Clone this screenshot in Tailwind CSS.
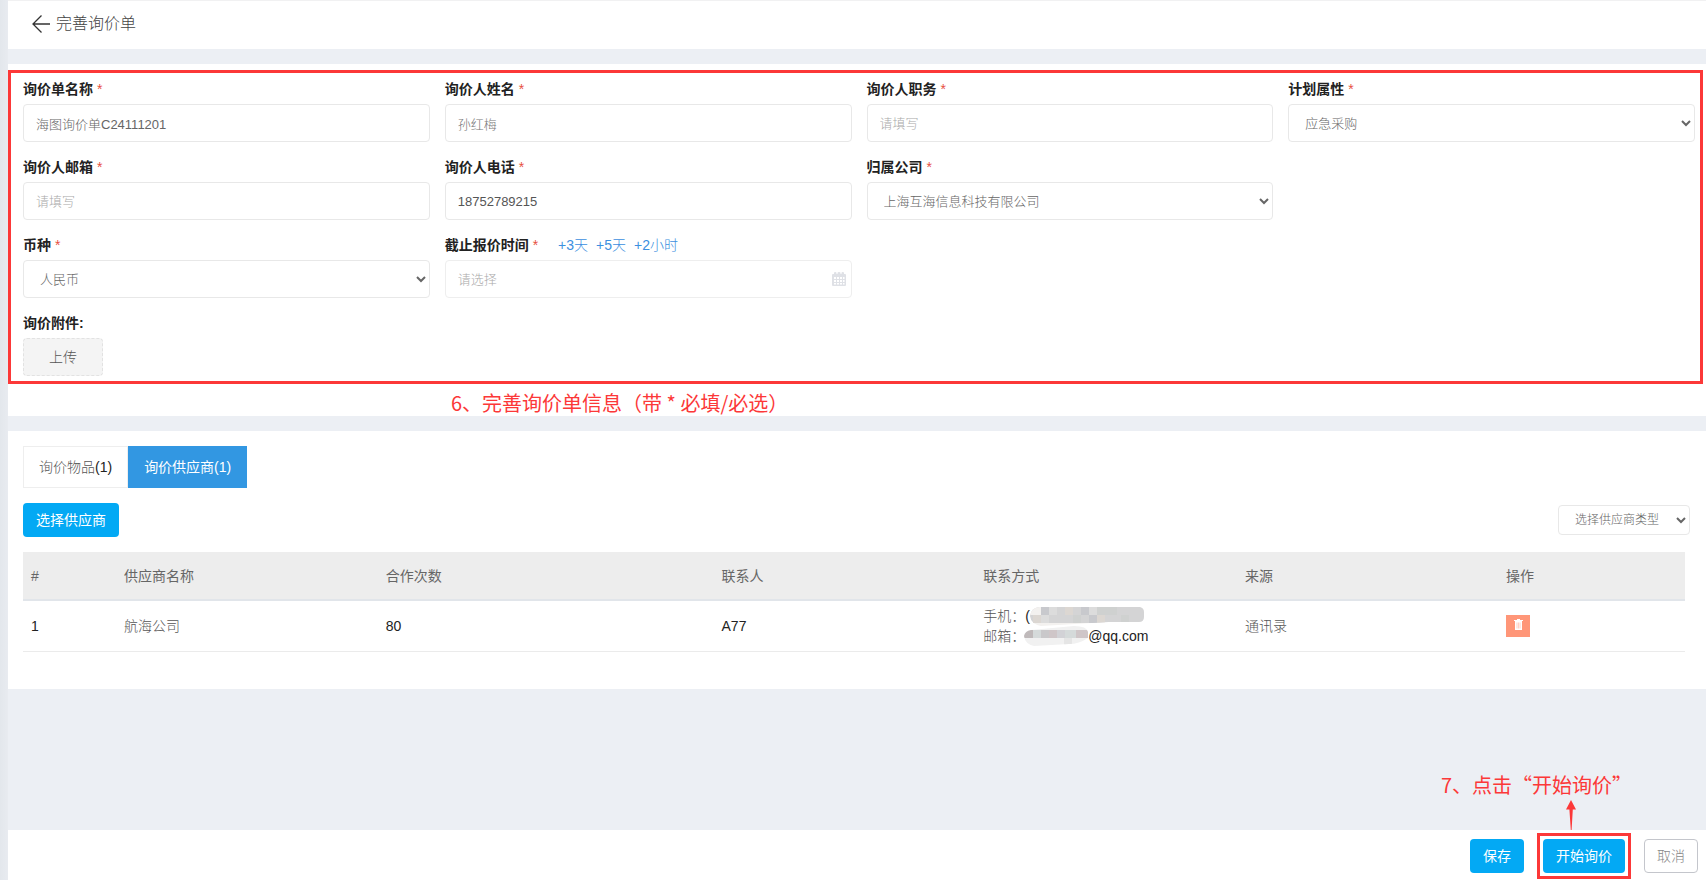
<!DOCTYPE html>
<html lang="zh-CN">
<head>
<meta charset="utf-8">
<title>完善询价单</title>
<script src="https://cdn.jsdelivr.net/npm/@tailwindcss/browser@4"></script>
</head>
<body class="flex min-h-screen bg-[#eceff4] font-['Liberation_Sans','Noto_Sans_CJK_SC',sans-serif] text-sm leading-5 text-[#222]">
<div class="w-2 shrink-0 bg-linear-to-r from-[#e3e7ec] to-[#e8ebf0]"></div>
<div class="flex min-w-0 flex-1 flex-col">

  <header class="flex h-[49px] items-center border-t border-[#f1f1f2] bg-white pb-0.5 pl-6">
    <a href="#" aria-label="返回" class="mr-1">
      <svg class="h-5 w-5" viewBox="0 0 20 20" fill="none" stroke="#333" stroke-width="1.3"><path d="M18 10H1M9.500 1.500L1 10l8.500 8.500"/></svg>
    </a>
    <h1 class="text-base leading-5 font-light text-[#444]">完善询价单</h1>
  </header>

  <section class="mt-[15px] bg-white pt-1.5">
    <form class="mr-[3px] grid grid-cols-4 gap-[15px] border-3 border-[#fc3838] pt-1.5 pr-[5px] pb-[5px] pl-3">
      <div class="flex flex-col gap-[5px]">
        <label for="name" class="font-bold">询价单名称 <span class="font-normal text-[#e7503f]">*</span></label>
        <input id="name" value="海图询价单C24111201" class="h-[38px] w-full rounded border border-[#e8e8e8] bg-white px-3 text-[13px] font-light text-[#666]">
      </div>
      <div class="flex flex-col gap-[5px]">
        <label for="person" class="font-bold">询价人姓名 <span class="font-normal text-[#e7503f]">*</span></label>
        <input id="person" value="孙红梅" class="h-[38px] w-full rounded border border-[#e8e8e8] bg-white px-3 text-[13px] font-light text-[#777]">
      </div>
      <div class="flex flex-col gap-[5px]">
        <label for="job" class="font-bold">询价人职务 <span class="font-normal text-[#e7503f]">*</span></label>
        <input id="job" placeholder="请填写" class="h-[38px] w-full rounded border border-[#e8e8e8] bg-white px-3 text-[13px] font-light placeholder:text-[#aaa]">
      </div>
      <div class="flex flex-col gap-[5px]">
        <label for="plan" class="font-bold">计划属性 <span class="font-normal text-[#e7503f]">*</span></label>
        <select id="plan" class="h-[38px] w-full rounded border border-[#e8e8e8] bg-white px-3 text-[13px] font-light text-[#666]"><option>应急采购</option></select>
      </div>

      <div class="flex flex-col gap-[5px]">
        <label for="mail" class="font-bold">询价人邮箱 <span class="font-normal text-[#e7503f]">*</span></label>
        <input id="mail" placeholder="请填写" class="h-[38px] w-full rounded border border-[#e8e8e8] bg-white px-3 text-[13px] font-light placeholder:text-[#aaa]">
      </div>
      <div class="flex flex-col gap-[5px]">
        <label for="tel" class="font-bold">询价人电话 <span class="font-normal text-[#e7503f]">*</span></label>
        <input id="tel" value="18752789215" class="h-[38px] w-full rounded border border-[#e8e8e8] bg-white px-3 text-[13px] font-light text-[#555]">
      </div>
      <div class="flex flex-col gap-[5px]">
        <label for="company" class="font-bold">归属公司 <span class="font-normal text-[#e7503f]">*</span></label>
        <select id="company" class="h-[38px] w-full rounded border border-[#e8e8e8] bg-white px-3 text-[13px] font-light text-[#666]"><option>上海互海信息科技有限公司</option></select>
      </div>

      <div class="col-start-1 flex flex-col gap-[5px]">
        <label for="currency" class="font-bold">币种 <span class="font-normal text-[#e7503f]">*</span></label>
        <select id="currency" class="h-[38px] w-full rounded border border-[#e8e8e8] bg-white px-3 text-[13px] font-light text-[#666]"><option>人民币</option></select>
      </div>
      <div class="flex flex-col gap-[5px]">
        <div class="flex">
          <label for="deadline" class="font-bold">截止报价时间 <span class="font-normal text-[#e7503f]">*</span></label>
          <div class="ml-5 flex gap-2 font-light text-[#3c8fe0]"><a href="#">+3天</a><a href="#">+5天</a><a href="#">+2小时</a></div>
        </div>
        <div class="relative">
          <input id="deadline" placeholder="请选择" class="h-[38px] w-full rounded border border-[#eeeeee] bg-white px-3 text-[13px] font-light placeholder:text-[#aaa]">
          <svg class="absolute top-3 right-1.5 h-[14px] w-[14px]" viewBox="0 0 14 14"><path fill="#dfe1e6" d="M1 2h1V1q0-1 1.200-1T4.500 1v1h1V1q0-1 1.500-1t1.500 1v1h1V1q0-1 1.300-1T12 1v1h1q1 0 1 1v10q0 1-1 1H1q-1 0-1-1V3q0-1 1-1z"/><path fill="#fff" d="M2 5h2v2H2zM5 5h2v2H5zM8 5h2v2H8zM11 5h1.500v2H11zM2 8h2v2H2zM5 8h2v2H5zM8 8h2v2H8zM11 8h1.500v2H11zM2 11h2v1.500H2zM5 11h2v1.500H5zM8 11h2v1.500H8zM11 11h1.500v1.500H11z"/></svg>
        </div>
      </div>

      <div class="col-start-1 flex flex-col items-start gap-[5px]">
        <span id="attach" class="font-bold">询价附件:</span>
        <button type="button" aria-describedby="attach" class="h-[38px] w-20 rounded border border-dashed border-[#e2e2e2] bg-[#f4f4f4] font-light text-[#555]">上传</button>
      </div>
    </form>
    <p class="pt-1.5 pl-[443px] font-['Noto_Sans_CJK_SC',sans-serif] text-xl leading-[26px] text-[#fc3838]">6、完善询价单信息（带 * 必填/必选）</p>
  </section>

  <section class="mt-[15px] bg-white pt-[15px] pr-4 pb-[37px] pl-[15px]">
    <div role="tablist" class="flex">
      <button role="tab" aria-selected="false" class="h-[42px] border border-[#eeeeee] px-[15px] font-light text-[#555]">询价物品<span class="text-[#222]">(1)</span></button>
      <button role="tab" aria-selected="true" class="h-[42px] bg-[#3297e2] px-4 text-white">询价供应商(1)</button>
    </div>
    <div class="mt-[15px] flex items-center justify-between">
      <button class="h-[34px] rounded bg-[#03a9f4] px-[13px] text-white">选择供应商</button>
      <select aria-label="选择供应商类型" class="h-[30px] w-[132px] rounded border border-[#e8e8e8] bg-white px-3 text-xs font-light text-[#666]"><option>选择供应商类型</option></select>
    </div>
    <div class="mt-[15px] pr-[5px]">
      <table class="w-full table-fixed border-collapse text-left">
        <colgroup><col class="w-[5.6%]"><col class="w-[15.75%]"><col class="w-[20.2%]"><col class="w-[15.75%]"><col class="w-[15.75%]"><col class="w-[15.7%]"><col></colgroup>
        <thead>
          <tr class="h-12 border-b-2 border-[#e1e5ea] bg-[#ededed] text-[#666]">
            <th class="px-2 font-normal">#</th><th class="px-2 font-normal">供应商名称</th><th class="px-2 font-normal">合作次数</th><th class="px-2 font-normal">联系人</th><th class="px-2 font-normal">联系方式</th><th class="px-2 font-normal">来源</th><th class="px-2 font-normal">操作</th>
          </tr>
        </thead>
        <tbody>
          <tr class="h-[51px] border-b border-[#ebebeb]">
            <td class="px-2">1</td>
            <td class="px-2 font-light text-[#555]">航海公司</td>
            <td class="px-2">80</td>
            <td class="px-2">A77</td>
            <td class="px-2">
              <div class="flex h-5 items-center whitespace-nowrap"><span class="font-light text-[#555]">手机：</span>(
                <svg class="-ml-px h-5 w-[115px]" viewBox="0 0 115 20">
                  <defs><clipPath id="m1"><path d="M10 1H111q4 1 4 5v5q0 5-5 5H80L12 20Q2 18 1 10 2 2 10 1z"/></clipPath></defs>
                  <g clip-path="url(#m1)"><path fill="#d4d4d5" d="M0 1h115v16H0z"/><path fill="#f3f1ef" d="M0 0h12v9H0zM0 17h76v3H0z"/><path fill="#c8c9cd" d="M12 1h8v8h-8zM52 1h8v8h-8zM60 9h8v8h-8z"/><path fill="#dcdcdc" d="M20 1h8v8h-8zM60 1h8v8h-8zM12 9h8v8h-8z"/><path fill="#dcd7d2" d="M4 9h8v8H4zM36 1h8v8h-8zM68 9h8v8h-8z"/><path fill="#cfd1d0" d="M44 9h8v8h-8zM68 1h20v8H68zM92 9h8v8h-8z"/></g>
                </svg>
              </div>
              <div class="flex h-5 items-center whitespace-nowrap"><span class="font-light text-[#555]">邮箱：</span>
                <svg class="-ml-px h-5 w-16" viewBox="0 0 64 20">
                  <defs><clipPath id="m2"><path d="M7 4L50 0q13 0 14 6v6Q55 18 45 18L10 20Q1 18 0 10 1 5 7 4z"/></clipPath></defs>
                  <g clip-path="url(#m2)"><path fill="#f1f1f1" d="M0 0h64v20H0z"/><path fill="#bfb9ba" d="M0 4h9v8H0z"/><path fill="#d5dada" d="M9 4h8v8H9zM40 4h12v8H40z"/><path fill="#c9c8ca" d="M17 4h8v8h-8z"/><path fill="#cfc6c8" d="M25 4h8v8h-8zM52 4h12v8H52z"/><path fill="#d2d2d6" d="M33 4h8v8h-8z"/><path fill="#e5e5e5" d="M40 12h8v8h-8z"/></g>
                </svg>@qq.com
              </div>
            </td>
            <td class="px-2 font-light text-[#555]">通讯录</td>
            <td class="px-2">
              <button aria-label="删除" class="flex h-[22px] w-6 justify-center bg-[#ff9678] pt-1">
                <svg class="ml-0.5 h-[11px] w-[9px]" viewBox="0 0 9 11"><path fill="#fff" d="M3 0h3v1h3v1H0V1h3zM1 2h7v9H1z"/><path stroke="#ffb49f" d="M3 3.500v6M4.500 3.500v6M6 3.500v6" stroke-width=".6"/></svg>
              </button>
            </td>
          </tr>
        </tbody>
      </table>
    </div>
  </section>

  <div class="flex flex-1 flex-col items-end justify-end pt-4 text-[#fc3838]">
    <p class="mr-[74px] font-['Noto_Sans_CJK_SC',sans-serif] text-xl leading-[30px]">7、点击“开始询价”</p>
    <svg class="mr-[130px] h-[30px] w-[10px]" viewBox="0 0 10 30" fill="#fc3838"><path d="M5 0l5 9.500H6.800L5.600 30h-.8L3.400 9.500H0z"/></svg>
  </div>

  <footer class="flex h-[50px] items-center justify-end bg-white pt-0.5 pr-2">
    <button class="h-[34px] rounded bg-[#03a9f4] px-[13px] text-white">保存</button>
    <div class="mx-[13px] border-3 border-[#fc3838] p-[3px]">
      <button class="block h-[34px] rounded bg-[#03a9f4] px-[13px] text-white">开始询价</button>
    </div>
    <button class="h-[34px] rounded border border-[#c4c6cc] bg-white px-3 font-light text-[#888]">取消</button>
  </footer>
</div>
</body>
</html>
